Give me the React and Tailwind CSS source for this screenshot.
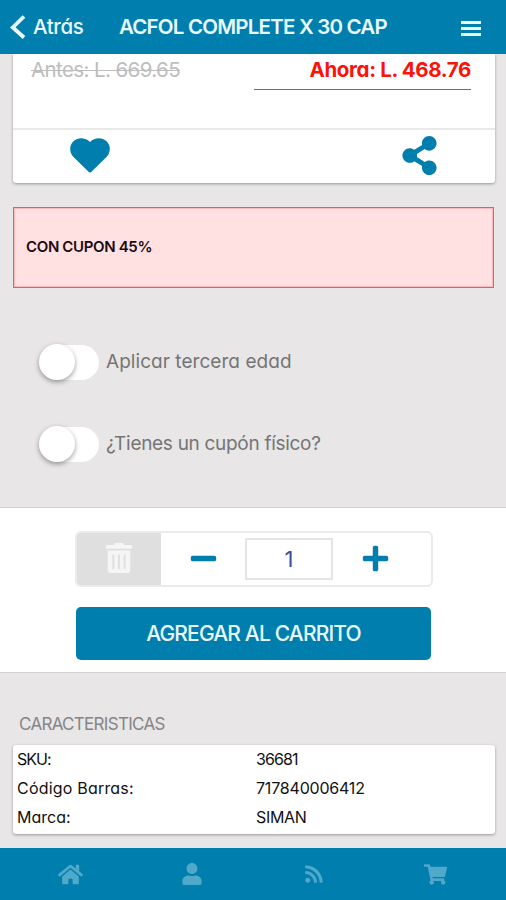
import {
  FaShareAlt, FaTrashAlt, FaMinus, FaPlus,
  FaHome, FaUser, FaRss, FaShoppingCart
} from "react-icons/fa"

const SPECS = [
  { label: "SKU:", value: "36681", lt: "tracking-[-1px]", vt: "tracking-[-0.9px]" },
  { label: "Código Barras:", value: "717840006412", lt: "tracking-[0.2px]", vt: "tracking-[-0.2px]" },
  { label: "Marca:", value: "SIMAN", lt: "tracking-[0px]", vt: "tracking-[-0.3px]" },
]

function Header({ title }) {
  return (
    <header className="h-[54px] shrink-0 bg-[#007eae] text-[#e8faff] flex items-center relative z-10">
      <button className="flex items-center pl-[10px] w-[119px]">
        <svg width="16" height="24" viewBox="0 0 16 24" fill="none" stroke="currentColor" strokeWidth="3.8">
          <path d="M14 1.500 2.800 12.500l11.200 10" />
        </svg>
        <span className="ml-[7px] text-[20.500px] leading-6 font-medium whitespace-nowrap tracking-[-0.4px]">Atrás</span>
      </button>
      <h1 className="text-[20.500px] leading-6 font-semibold whitespace-nowrap tracking-[-0.8px]">{title}</h1>
      <button className="ml-auto mr-[25px] mt-[2px] flex flex-col gap-[3px]">
        <span className="block w-5 h-[3px] bg-current" />
        <span className="block w-5 h-[3px] bg-current" />
        <span className="block w-5 h-[3px] bg-current" />
      </button>
    </header>
  )
}

function HeartIcon() {
  return (
    <svg width="40" height="35" viewBox="0 0 40 35" fill="currentColor">
      <path d="M20 34.500c-.8 0-1.200-.4-1.700-.9L3.500 19C-1 14.300-.8 7.300 3.400 3.300 8-.9 15.500-.5 20 4 24.500-.5 32-.9 36.600 3.300c4.200 4 4.400 11 -.1 15.700L21.700 33.600c-.5.5-.9.9-1.700.9z" />
    </svg>
  )
}

function PriceCard() {
  return (
    <section className="ml-[13px] mr-[11px] h-[129px] bg-white rounded-b-[3px] shadow-[0_1px_3px_rgba(0,0,0,0.35)]">
      <div className="h-[76px] border-b-2 border-[#e9e9e9] flex justify-between pl-[18px] pr-6">
        <p className="pt-1 text-[20.500px] leading-6 text-[#bdbdbd] line-through decoration-1 whitespace-nowrap tracking-[-0.6px]">
          Antes: L. 669.65
        </p>
        <p className="w-[217px] h-9 pt-1 border-b border-[#2f9a3c] text-right text-[20.500px] leading-6 font-bold text-[#fb1208] whitespace-nowrap tracking-[-0.35px]">
          Ahora: L. 468.76
        </p>
      </div>
      <div className="h-[51px] flex items-center justify-between pl-[57px] pr-[56px] text-[#007eae]">
        <HeartIcon />
        <FaShareAlt size={39} />
      </div>
    </section>
  )
}

function Toggle({ label, tracking }) {
  return (
    <label className="h-[82px] flex items-center text-[19px] text-[#757575]">
      <span className="w-[60px] h-[35px] rounded-full bg-white flex items-center">
        <span className="w-9 h-9 rounded-full bg-white shadow-[0_2px_5px_rgba(0,0,0,0.38)]" />
      </span>
      <span className={`ml-[7px] whitespace-nowrap ${tracking}`}>{label}</span>
    </label>
  )
}

function AddToCart() {
  return (
    <section className="h-[166px] mt-[22px] pt-[23px] pl-[75px] bg-white border-y border-[#d3d2d3]">
      <div className="w-[358px] h-[56px] border-2 border-[#ebebeb] rounded-[6px] flex items-center text-[#007eae] overflow-hidden">
        <button className="w-[84px] h-full pb-[2px] bg-[#dfdfdf] text-[#f5f5f5] flex items-center justify-center">
          <FaTrashAlt size={30} />
        </button>
        <button className="w-[84px] pb-[2px] flex justify-center"><FaMinus size={29} /></button>
        <span className="w-[88px] h-[42px] border-2 border-[#e4e4e4] flex items-center justify-center text-[22px] text-[#3b4fa0]">
          1
        </span>
        <button className="w-[84px] pb-[2px] flex justify-center"><FaPlus size={29} /></button>
      </div>
      <button className="mt-5 ml-px w-[355px] h-[53px] rounded-[5px] bg-[#007eae] text-[#e8faff] text-[21px] font-medium whitespace-nowrap tracking-[-0.83px]">
        AGREGAR AL CARRITO
      </button>
    </section>
  )
}

function Specs() {
  return (
    <section className="pl-[13px] pr-[11px] pt-[39px]">
      <h2 className="pl-[6px] h-[33px] text-[17px] leading-6 text-[#858585] whitespace-nowrap tracking-[-0.7px]">
        CARACTERISTICAS
      </h2>
      <dl className="h-[89px] bg-white rounded-[3px] shadow-[0_1px_3px_rgba(0,0,0,0.35)] text-[16px] text-[#111]">
        {SPECS.map(s => (
          <div key={s.label} className="flex h-[29.300px] items-center pb-[2px] pl-1 whitespace-nowrap">
            <dt className={`w-[239px] ${s.lt}`}>{s.label}</dt>
            <dd className={s.vt}>{s.value}</dd>
          </div>
        ))}
      </dl>
    </section>
  )
}

export default function App() {
  return (
    <div className="w-[506px] h-[900px] flex flex-col overflow-hidden bg-[#e8e6e7] font-['Inter','Liberation_Sans',sans-serif] [font-feature-settings:'cv11']">
      <Header title="ACFOL COMPLETE X 30 CAP" />
      <main className="flex-1">
        <PriceCard />
        <div className="mt-6 ml-[13px] mr-[12px] h-[81px] pl-3 border border-[#f4585e] shadow-[inset_0_0_0_1px_rgba(245,90,96,0.3)] bg-[#ffe1e2] flex items-center text-[15px] font-semibold text-[#1d0a10] whitespace-nowrap tracking-[-0.35px]">
          CON CUPON 45%
        </div>
        <div className="pt-[33px] pl-[39px]">
          <Toggle label="Aplicar tercera edad" tracking="tracking-[0.05px]" />
          <Toggle label="¿Tienes un cupón físico?" tracking="tracking-[-0.3px]" />
        </div>
        <AddToCart />
        <Specs />
      </main>
      <nav className="h-[52px] shrink-0 px-[10px] bg-[#007eae] text-[#4ea9ca] grid grid-cols-4 place-items-center">
        <FaHome size={25} />
        <FaUser size={22} />
        <FaRss size={20} />
        <FaShoppingCart size={23} />
      </nav>
    </div>
  )
}
